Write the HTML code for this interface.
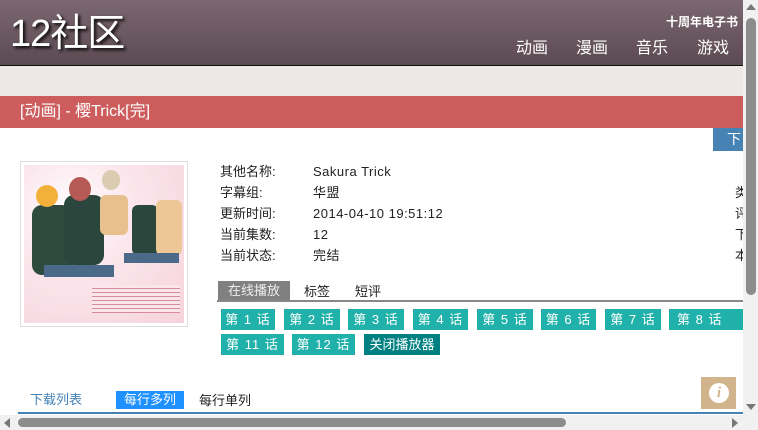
<!DOCTYPE html>
<html><head><meta charset="utf-8"><style>
*{margin:0;padding:0;box-sizing:border-box}
body{width:758px;height:430px;overflow:hidden;background:#fff;position:relative;font-family:"Liberation Sans","Noto Sans CJK SC",sans-serif;font-size:13px;color:#222}
.a{position:absolute}
.hd{left:0;top:0;width:743px;height:66px;background:linear-gradient(#7b6770,#5c4a52);border-bottom:1px solid #111}
.logo{left:10px;top:12px;font-size:38px;color:#fff;line-height:44px;text-shadow:2px 2px 3px #000;letter-spacing:-1px}
.nav{top:38px;font-size:16px;color:#fff;line-height:22px}
.btn{height:21px;line-height:21px;background:#20b2aa;color:#fff;font-size:13px;text-align:center;letter-spacing:1px}
.lb{left:220px;font-size:13px;line-height:16px}
.vl{left:313px;font-size:13px;line-height:16px;letter-spacing:.5px}
</style></head><body>
<div class="a hd"></div>
<div class="a logo">12社区</div>
<div class="a" style="left:666px;top:13px;color:#fff;font-size:12px;font-weight:bold">十周年电子书</div>
<div class="a nav" style="left:516px">动画</div>
<div class="a nav" style="left:576px">漫画</div>
<div class="a nav" style="left:636px">音乐</div>
<div class="a nav" style="left:697px">游戏</div>
<div class="a" style="left:0;top:66px;width:743px;height:30px;background:#ede8e5"></div>
<div class="a" style="left:0;top:96px;width:743px;height:32px;background:#cd5c5c;color:#fff;font-size:16px;line-height:32px;padding-left:20px">[动画] - 樱Trick[完]</div>
<div class="a" style="left:713px;top:128px;width:30px;height:23px;background:#4682b4;color:#fff;font-size:14px;line-height:23px;padding-left:14px;overflow:hidden">下</div>
<div class="a" style="left:20px;top:161px;width:168px;height:166px;border:1px solid #ddd;background:#fff;padding:3px">
<div style="width:160px;height:158px;background:radial-gradient(circle at 30% 30%,#fff 0,#fbe6ec 40%,#f5d2dc 100%);position:relative;overflow:hidden">
<div class="a" style="left:8px;top:40px;width:40px;height:70px;background:#2f4a3e;border-radius:10px"></div>
<div class="a" style="left:12px;top:20px;width:22px;height:22px;background:#f3b13a;border-radius:50%"></div>
<div class="a" style="left:40px;top:30px;width:40px;height:70px;background:#2b463c;border-radius:10px"></div>
<div class="a" style="left:45px;top:12px;width:22px;height:24px;background:#b55a55;border-radius:50%"></div>
<div class="a" style="left:78px;top:5px;width:18px;height:20px;background:#d9ccb0;border-radius:50%"></div>
<div class="a" style="left:76px;top:30px;width:28px;height:40px;background:#e7c08e;border-radius:6px"></div>
<div class="a" style="left:108px;top:40px;width:26px;height:50px;background:#2b463c;border-radius:6px"></div>
<div class="a" style="left:132px;top:35px;width:26px;height:55px;background:#edc796;border-radius:6px"></div>
<div class="a" style="left:20px;top:100px;width:70px;height:12px;background:#4b6a8a"></div>
<div class="a" style="left:100px;top:88px;width:55px;height:10px;background:#4b6a8a"></div>
<div class="a" style="left:68px;top:120px;width:88px;height:28px;background:repeating-linear-gradient(#fbe6ec 0 3px,#d88aa0 3px 4px)"></div>
</div></div>
<div class="a lb" style="top:164px">其他名称:</div><div class="a vl" style="top:164px">Sakura Trick</div>
<div class="a lb" style="top:185px">字幕组:</div><div class="a vl" style="top:185px">华盟</div>
<div class="a lb" style="top:206px">更新时间:</div><div class="a vl" style="top:206px">2014-04-10 19:51:12</div>
<div class="a lb" style="top:227px">当前集数:</div><div class="a vl" style="top:227px">12</div>
<div class="a lb" style="top:248px">当前状态:</div><div class="a vl" style="top:248px">完结</div>
<div class="a" style="left:735px;top:185px;width:8px;overflow:hidden;line-height:16px">类</div>
<div class="a" style="left:735px;top:206px;width:8px;overflow:hidden;line-height:16px">评</div>
<div class="a" style="left:735px;top:227px;width:8px;overflow:hidden;line-height:16px">下</div>
<div class="a" style="left:735px;top:248px;width:8px;overflow:hidden;line-height:16px">本</div>
<div class="a" style="left:218px;top:281px;width:72px;height:19px;background:#808080;color:#eee;line-height:20px;text-align:center">在线播放</div>
<div class="a" style="left:304px;top:283px;line-height:18px">标签</div>
<div class="a" style="left:355px;top:283px;line-height:18px">短评</div>
<div class="a" style="left:217px;top:300px;width:526px;height:2px;background:#888"></div>
<div class="a btn" style="left:221px;top:309px;width:54px">第 1 话</div>
<div class="a btn" style="left:284px;top:309px;width:56px">第 2 话</div>
<div class="a btn" style="left:348px;top:309px;width:56px">第 3 话</div>
<div class="a btn" style="left:413px;top:309px;width:55px">第 4 话</div>
<div class="a btn" style="left:477px;top:309px;width:56px">第 5 话</div>
<div class="a btn" style="left:541px;top:309px;width:55px">第 6 话</div>
<div class="a btn" style="left:605px;top:309px;width:56px">第 7 话</div>
<div class="a btn" style="left:669px;top:309px;width:74px;text-align:left;padding-left:8px;overflow:hidden">第 8 话</div>
<div class="a btn" style="left:221px;top:334px;width:63px">第 11 话</div>
<div class="a btn" style="left:292px;top:334px;width:63px">第 12 话</div>
<div class="a btn" style="left:364px;top:334px;width:76px;background:#008080;letter-spacing:0">关闭播放器</div>
<div class="a" style="left:30px;top:392px;color:#4682b4;line-height:16px">下载列表</div>
<div class="a" style="left:116px;top:391px;width:68px;height:18px;background:#1e90ff;color:#fff;line-height:18px;text-align:center">每行多列</div>
<div class="a" style="left:199px;top:393px;line-height:16px">每行单列</div>
<div class="a" style="left:18px;top:412px;width:725px;height:2px;background:#4682b4"></div>
<div class="a" style="left:701px;top:377px;width:35px;height:32px;background:#d2b48c"></div>
<div class="a" style="left:709px;top:383px;width:20px;height:20px;border-radius:50%;background:#fff;color:#d2b48c;font:italic bold 15px/20px 'Liberation Serif',serif;text-align:center">i</div>
<div class="a" style="left:743px;top:0;width:15px;height:415px;background:#f1f1f1"></div>
<div class="a" style="left:746px;top:18px;width:10px;height:277px;background:#8c8c8c;border-radius:5px"></div>
<div class="a" style="left:746px;top:4px;width:0;height:0;border-left:5px solid transparent;border-right:5px solid transparent;border-bottom:6px solid #777"></div>
<div class="a" style="left:746px;top:404px;width:0;height:0;border-left:5px solid transparent;border-right:5px solid transparent;border-top:6px solid #777"></div>
<div class="a" style="left:0;top:415px;width:758px;height:15px;background:#f1f1f1"></div>
<div class="a" style="left:18px;top:418px;width:548px;height:9px;background:#8c8c8c;border-radius:5px"></div>
<div class="a" style="left:4px;top:418px;width:0;height:0;border-top:5px solid transparent;border-bottom:5px solid transparent;border-right:6px solid #777"></div>
<div class="a" style="left:732px;top:418px;width:0;height:0;border-top:5px solid transparent;border-bottom:5px solid transparent;border-left:6px solid #777"></div>
</body></html>
